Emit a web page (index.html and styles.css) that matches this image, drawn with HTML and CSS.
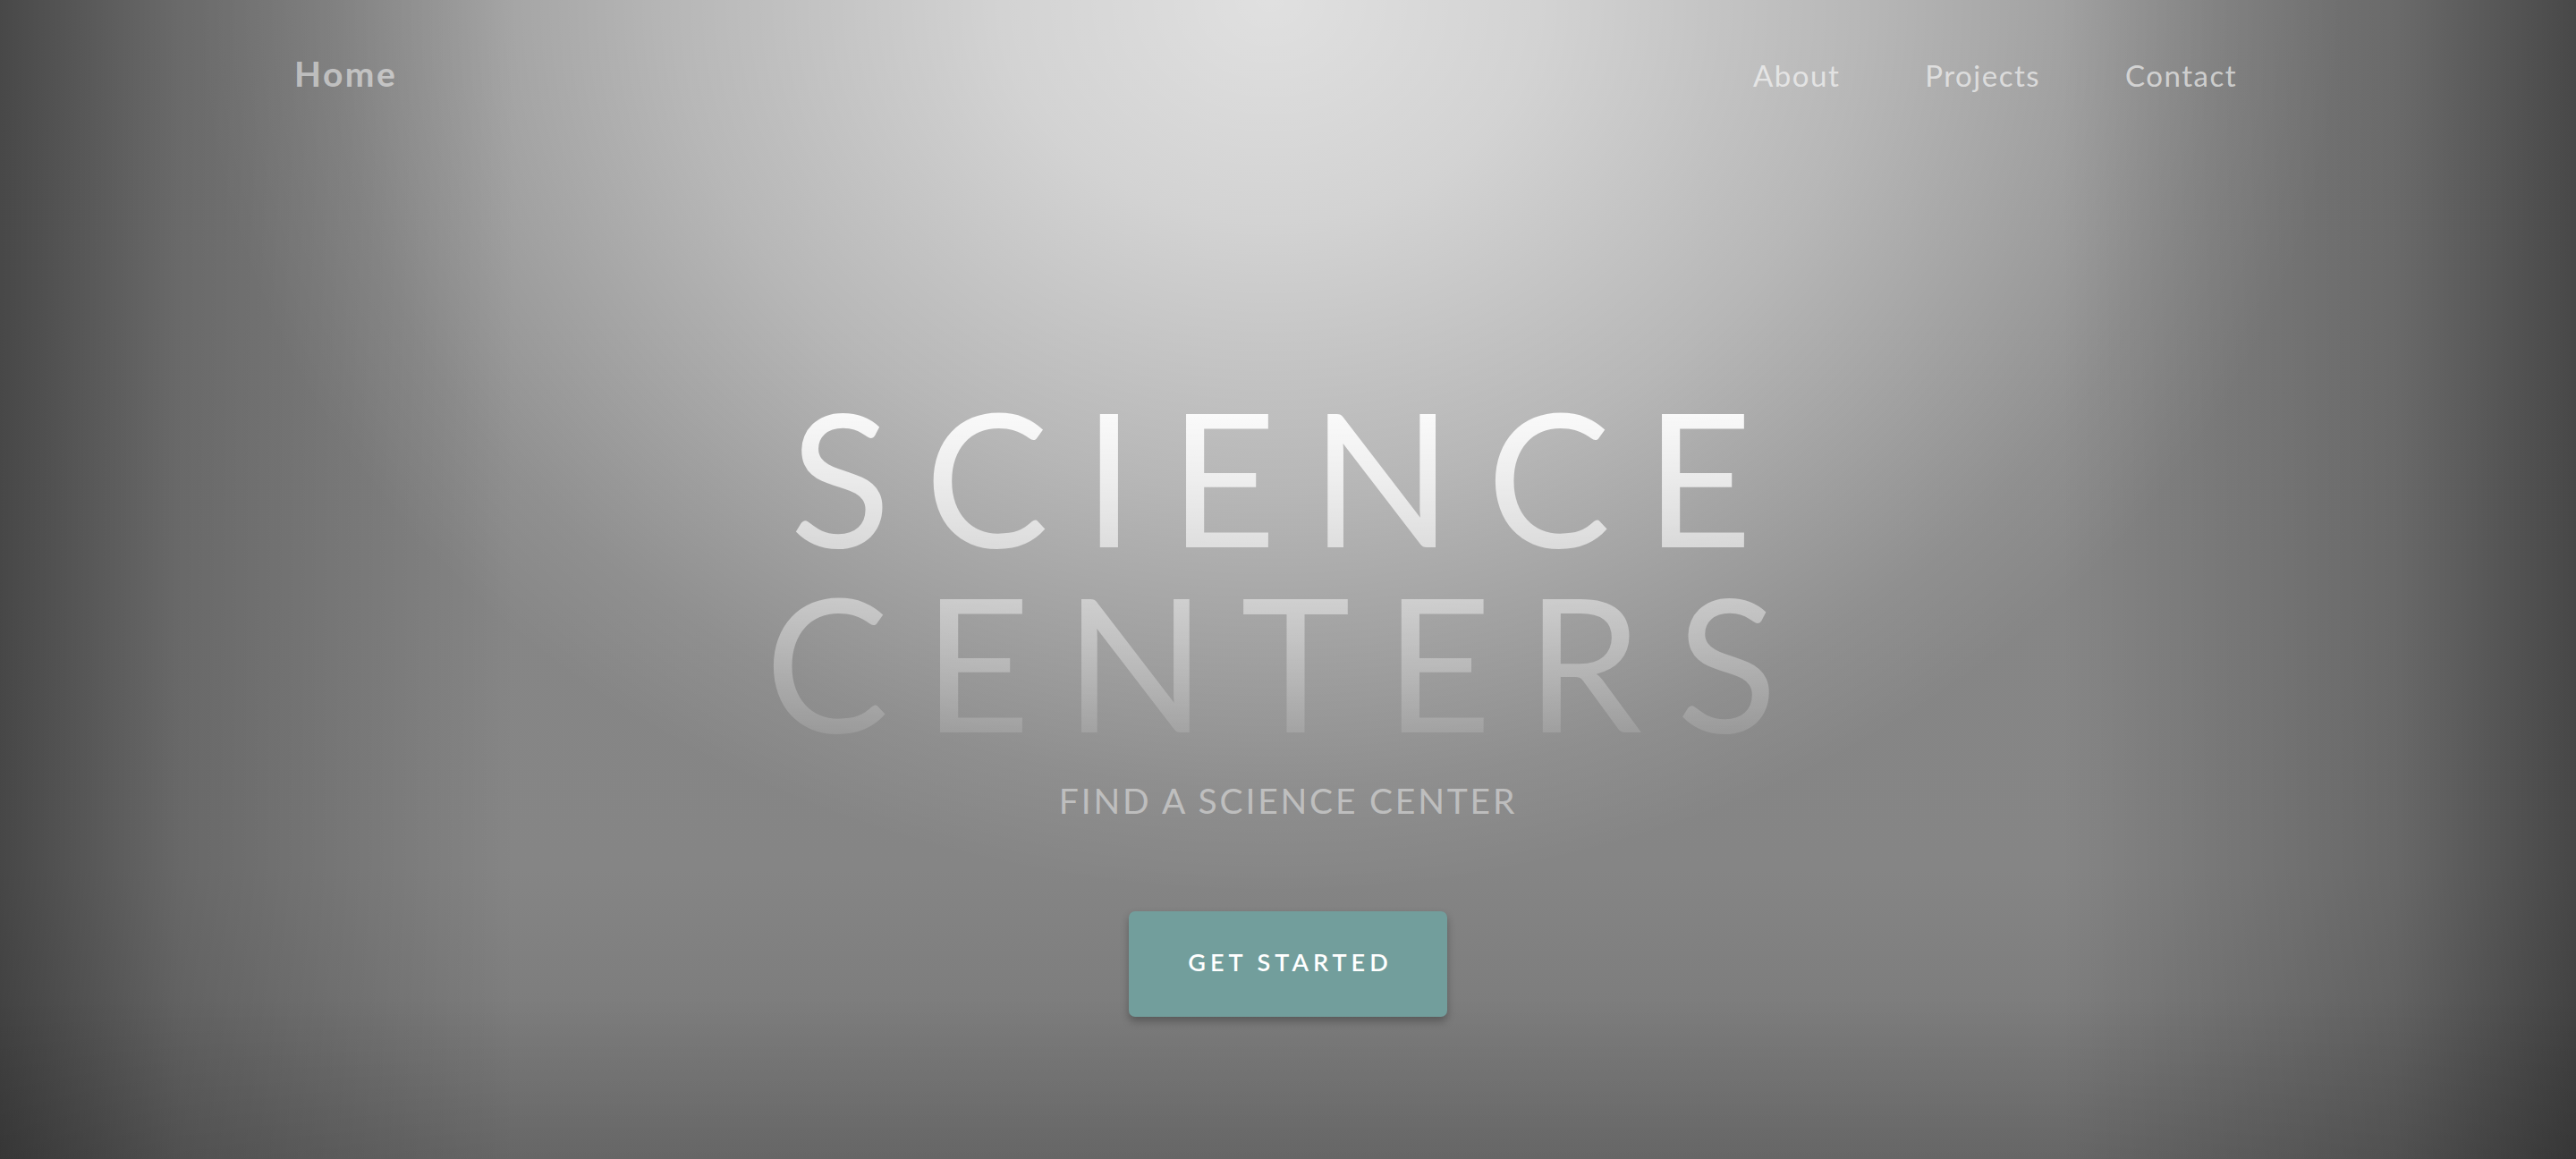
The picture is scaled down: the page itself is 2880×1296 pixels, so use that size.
FILE: index.html
```html
<!DOCTYPE html>
<html lang="en">
<head>
<meta charset="utf-8">
<title>Science Centers</title>
<link rel="stylesheet" href="styles.css">
</head>
<body>
<div class="page">
  <header class="nav">
    <a class="brand" href="#">Home</a>
    <nav class="links">
      <a href="#">About</a>
      <a href="#">Projects</a>
      <a href="#">Contact</a>
    </nav>
  </header>
  <main class="hero">
    <h1 class="title">SCIENCE<br>CENTERS</h1>
    <p class="subtitle">FIND A SCIENCE CENTER</p>
    <a class="cta" href="#">GET STARTED</a>
  </main>
</div>
</body>
</html>
```
FILE: styles.css
```css
html, body {
  margin: 0;
  padding: 0;
}
body {
  font-family: Lato, "Open Sans", "DejaVu Sans", sans-serif;
  background: #808080;
}
a {
  text-decoration: none;
  color: inherit;
}
.page {
  height: 1296px;
  overflow: hidden;
  display: flex;
  flex-direction: column;
  background:
    linear-gradient(to bottom, rgba(0,0,0,0) 86%, rgba(0,0,0,0.12) 100%),
    linear-gradient(to right, rgba(0,0,0,0.47) 0%, rgba(0,0,0,0.22) 7%, rgba(0,0,0,0) 20%, rgba(0,0,0,0) 80%, rgba(0,0,0,0.22) 93%, rgba(0,0,0,0.47) 100%),
    radial-gradient(ellipse 1200px 1000px at 1420px 0, rgba(255,255,255,0.74) 0%, rgba(255,255,255,0.63) 25%, rgba(255,255,255,0.4) 55%, rgba(255,255,255,0.08) 88%, rgba(255,255,255,0) 100%),
    linear-gradient(to bottom, #888888 0%, #858585 75%, #747474 100%);
}
.nav {
  display: flex;
  justify-content: space-between;
  align-items: baseline;
  padding: 59px 379px 0 329px;
}
.brand {
  font-size: 39px;
  font-weight: 700;
  line-height: 1.2;
  letter-spacing: 2.5px;
  color: rgba(255,255,255,0.52);
}
.links {
  display: flex;
  gap: 95px;
  align-items: baseline;
}
.links a {
  font-size: 33px;
  line-height: 1.2;
  letter-spacing: 1.5px;
  color: rgba(255,255,255,0.62);
}
.hero {
  display: flex;
  flex-direction: column;
  align-items: center;
  padding-top: 322px;
}
.title {
  margin: 0;
  font-size: 208px;
  font-weight: 400;
  line-height: 207px;
  letter-spacing: 38px;
  text-align: center;
  color: transparent;
  background: linear-gradient(to bottom, rgba(255,255,255,1) 0%, rgba(255,255,255,0.08) 100%);
  -webkit-background-clip: text;
  background-clip: text;
}
.subtitle {
  margin: 30px 0 0;
  font-size: 39px;
  line-height: 1.2;
  letter-spacing: 2.8px;
  color: rgba(255,255,255,0.45);
}
.cta {
  margin-top: 100px;
  width: 356px;
  height: 118px;
  display: flex;
  align-items: center;
  justify-content: center;
  box-sizing: border-box;
  padding: 0 0 5px 5px;
  background: #729e9c;
  border-radius: 7px;
  box-shadow: 0 5px 10px rgba(0,0,0,0.28);
  color: #ffffff;
  font-size: 27px;
  font-weight: 600;
  letter-spacing: 5px;
}
```
